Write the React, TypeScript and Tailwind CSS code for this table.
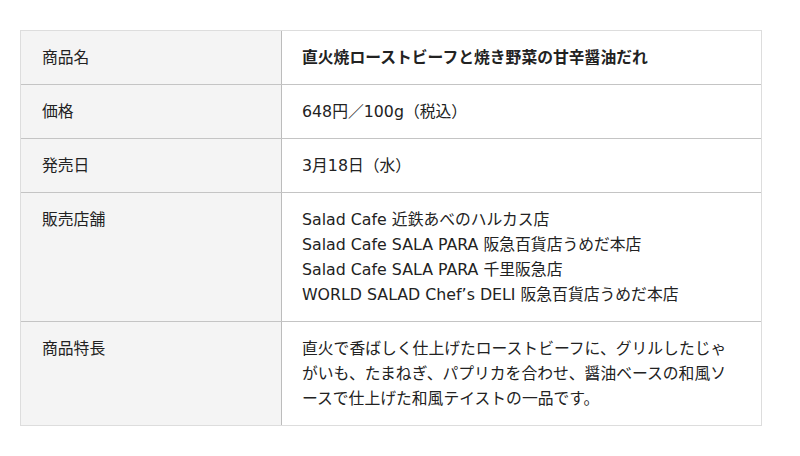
import React from "react";

const rows: { label: string; content: React.ReactNode }[] = [
  { label: "商品名", content: <span className="font-bold">直火焼ローストビーフと焼き野菜の甘辛醤油だれ</span> },
  { label: "価格", content: "648円／100g（税込）" },
  { label: "発売日", content: "3月18日（水）" },
  {
    label: "販売店舗",
    content: (
      <>
        <div>Salad Cafe 近鉄あべのハルカス店</div>
        <div>Salad Cafe SALA PARA 阪急百貨店うめだ本店</div>
        <div>Salad Cafe SALA PARA 千里阪急店</div>
        <div>WORLD SALAD Chef’s DELI 阪急百貨店うめだ本店</div>
      </>
    ),
  },
  {
    label: "商品特長",
    content:
      "直火で香ばしく仕上げたローストビーフに、グリルしたじゃがいも、たまねぎ、パプリカを合わせ、醤油ベースの和風ソースで仕上げた和風テイストの一品です。",
  },
];

export default function App() {
  return (
    <div
      className="w-[800px] h-[456px] bg-white pt-[30px] pl-[20px]"
      style={{ fontFamily: '"DejaVu Sans", "Noto Sans CJK JP", sans-serif' }}
    >
      <div className="w-[742px] border border-[#dddddd] text-[15.8px] leading-[25px] text-[#222222]">
        {rows.map((r, i) => (
          <div
            key={i}
            className={`grid grid-cols-[261px_1fr] ${i > 0 ? "border-t border-[#c4c4c4]" : ""}`}
          >
            <div className="bg-[#f4f4f4] border-r border-[#bcbcbc] pl-[21px] pr-[21px] pt-[14px] pb-[14px]">
              {r.label}
            </div>
            <div className="pl-[20px] pr-[30px] pt-[14px] pb-[14px] [line-break:loose]">{r.content}</div>
          </div>
        ))}
      </div>
    </div>
  );
}
